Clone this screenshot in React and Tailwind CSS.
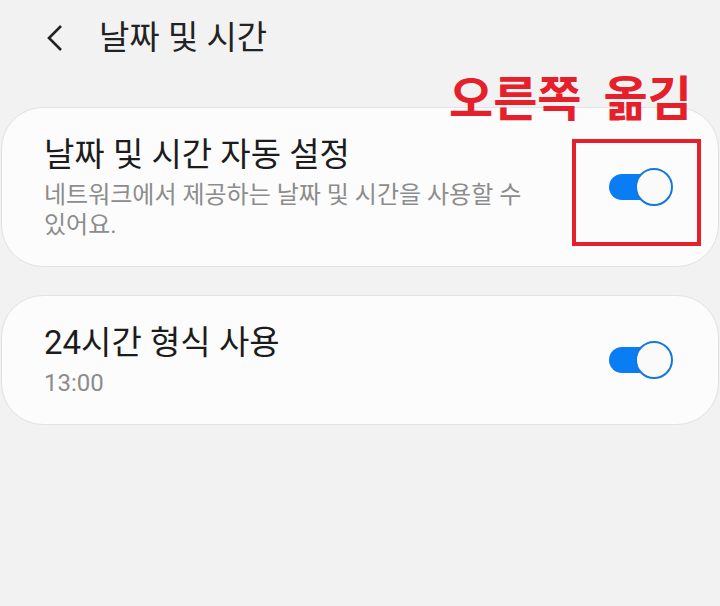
import React from "react";

const font = { fontFamily: 'Roboto, "Noto Sans CJK KR", sans-serif' };

const Toggle = () => (
    <div className="relative w-[64px] h-[38px] flex-shrink-0">
        <span className="absolute left-0 top-[6px] w-[56px] h-[26px] rounded-full bg-[#0a7cf4]" />
        <span className="absolute right-0 top-0 w-[38px] h-[38px] rounded-full bg-[#fafafa] border-2 border-[#1677de]" />
    </div>
);

const Row = ({ title, desc, className }) => (
    <div className={`flex items-center justify-between bg-[#fcfcfc] border border-[#e2e2e2] rounded-[42px] pl-[42px] pr-[45px] ${className}`}>
        <div className="max-w-[500px] break-keep">
            <p className="text-[33px] leading-[40px] text-[#1c1c1c]">{title}</p>
            <p className="text-[24px] leading-[30px] text-[#8c8c8c] mt-[5px]">{desc}</p>
        </div>
        <Toggle />
    </div>
);

export default function App() {
    return (
        <div className="relative w-[720px] h-[606px] bg-[#f2f2f2] overflow-hidden" style={font}>
            {/* 헤더 */}
            <div className="h-[76px] flex items-center pl-[44px] gap-[33px]">
                <svg width="22" height="28" viewBox="0 0 22 28" fill="none">
                    <path d="M17 2 L5 14 L17 26" stroke="#222" strokeWidth="2.6" />
                </svg>
                <h1 className="text-[33px] text-[#222]">날짜 및 시간</h1>
            </div>

            <div className="flex flex-col gap-[28px] pt-[31px] px-[1px]">
                <Row
                    className="h-[160px]"
                    title="날짜 및 시간 자동 설정"
                    desc="네트워크에서 제공하는 날짜 및 시간을 사용할 수 있어요."
                />
                <Row className="h-[130px]" title="24시간 형식 사용" desc="13:00" />
            </div>

            {/* 주석 */}
            <div className="absolute left-[449px] top-[76px] flex gap-[22px] text-[48px] leading-none font-bold text-[#e5202b]">
                <span>오른쪽</span>
                <span>옮김</span>
            </div>
            <div className="absolute left-[572px] top-[139px] w-[129px] h-[107px] border-4 border-[#e5202b]" />
        </div>
    );
}
